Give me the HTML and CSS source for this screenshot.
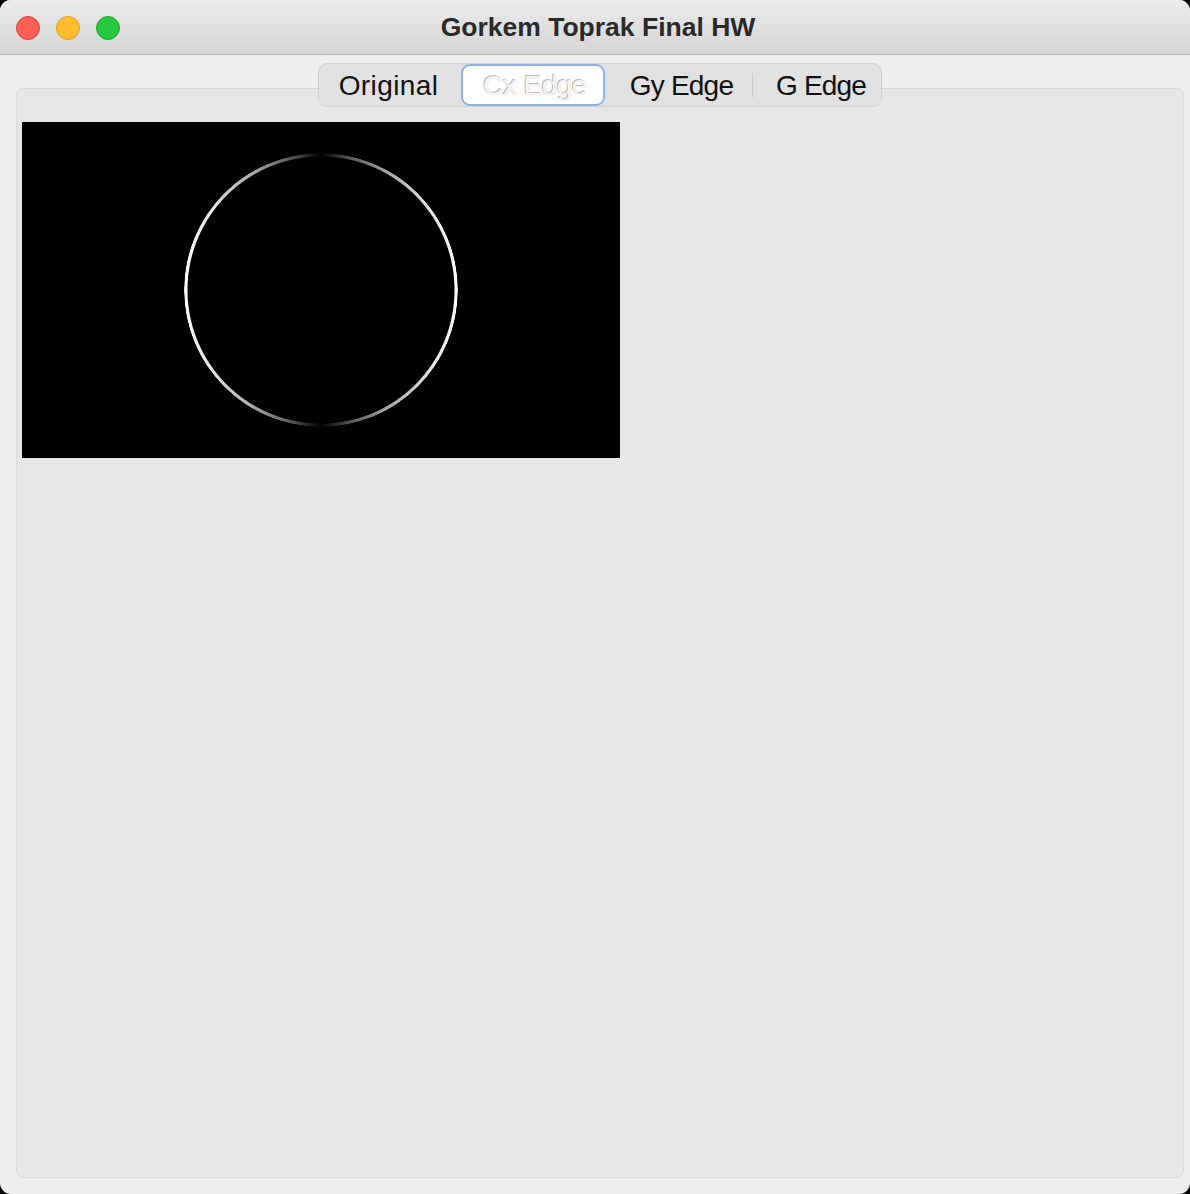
FILE: index.html
```html
<!DOCTYPE html>
<html>
<head>
<meta charset="utf-8">
<title>Gorkem Toprak Final HW</title>
<link rel="stylesheet" href="styles.css">
</head>
<body>
<div class="window">
  <header class="titlebar">
    <div class="lights">
      <span class="light close"></span>
      <span class="light min"></span>
      <span class="light max"></span>
    </div>
    <div class="title">Gorkem Toprak Final HW</div>
  </header>
  <main class="content">
    <nav class="tabs">
      <div class="tab tab-original">Original</div>
      <div class="tab tab-cx selected">Cx Edge</div>
      <div class="tab tab-gy">Gy Edge</div>
      <div class="sep"></div>
      <div class="tab tab-g">G Edge</div>
    </nav>
    <section class="panel">
      <div class="image">
        <div class="ring"></div>
      </div>
    </section>
  </main>
</div>
</body>
</html>
```

FILE: styles.css
```css
html, body {
  margin: 0;
  padding: 0;
  background: #000;
  width: 1190px;
  height: 1194px;
  overflow: hidden;
}
.window {
  width: 1190px;
  height: 1194px;
  background: #eeeeee;
  border-radius: 11px;
  overflow: hidden;
  display: flex;
  flex-direction: column;
  font-family: "Liberation Sans", Arial, sans-serif;
}
.titlebar {
  height: 54px;
  flex: none;
  background: linear-gradient(#ebebeb, #d5d5d5);
  border-bottom: 1px solid #b3b3b3;
  display: flex;
  align-items: center;
  justify-content: center;
  position: relative;
}
.lights {
  position: absolute;
  left: 16px;
  top: 16px;
  display: flex;
  gap: 16px;
}
.light {
  width: 24px;
  height: 24px;
  border-radius: 50%;
  box-sizing: border-box;
}
.close { background: #fe5f57; border: 1px solid #e0443e; }
.min { background: #febc2e; border: 1px solid #dea123; }
.max { background: #28c840; border: 1px solid #1aab29; }
.title {
  font-size: 26.5px;
  font-weight: bold;
  color: #2a2a2a;
  margin-left: 6px;
}
.content {
  flex: 1;
  display: flex;
  flex-direction: column;
  padding: 8px 6px 16px 16px;
}
.tabs {
  position: relative;
  z-index: 2;
  align-self: center;
  height: 44px;
  box-sizing: border-box;
  display: flex;
  align-items: center;
  background: #e1e1e1;
  border: 1px solid #d2d2d2;
  border-radius: 9px;
  margin-bottom: -19px;
}
.tab {
  height: 42px;
  box-sizing: border-box;
  display: flex;
  align-items: center;
  justify-content: center;
  font-size: 28px;
  color: #111;
  padding-top: 1px;
}
.tab-original { width: 142px; letter-spacing: 0.4px; padding-right: 3px; }
.tab-cx { width: 144px; letter-spacing: -0.5px; padding-left: 4px; }
.tab-gy { width: 147px; letter-spacing: -0.8px; padding-left: 6px; }
.tab-g { width: 128px; letter-spacing: -0.8px; padding-left: 8px; }
.sep {
  width: 1px;
  height: 24px;
  background: #c8c8c8;
}
.tab.selected {
  background: #fff;
  border: 2px solid #86b4ea;
  border-radius: 9px;
  color: #f4f4f4;
  text-shadow: -1px -1px 0 #b9b9b9, 0 0 1px #c8c8c8;
}
.panel {
  flex: 1;
  position: relative;
  z-index: 1;
  background: #e6e6e6;
  border: 1px solid #d9d9d9;
  border-radius: 7px;
  padding: 33px 0 0 5px;
}
.image {
  width: 598px;
  height: 336px;
  background: #000;
  position: relative;
}
.ring {
  position: absolute;
  left: 162px;
  top: 31px;
  width: 274px;
  height: 274px;
  border-radius: 50%;
  background: conic-gradient(#000 0deg, #555 12deg, #aaa 30deg, #e8e8e8 55deg, #fff 90deg, #e8e8e8 125deg, #aaa 150deg, #555 168deg, #000 180deg, #555 192deg, #aaa 210deg, #e8e8e8 235deg, #fff 270deg, #e8e8e8 305deg, #aaa 330deg, #555 348deg, #000 360deg);
  -webkit-mask: radial-gradient(circle, transparent 133px, #000 134px, #000 136.5px, transparent 137.5px);
  mask: radial-gradient(circle, transparent 133px, #000 134px, #000 136.5px, transparent 137.5px);
}
```
